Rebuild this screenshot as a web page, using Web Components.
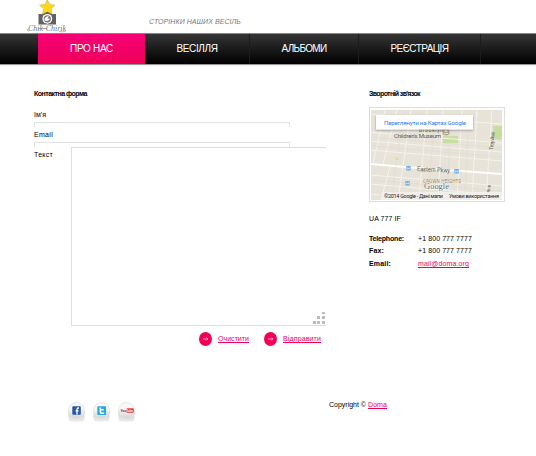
<!DOCTYPE html>
<html lang="uk">
<head>
<meta charset="utf-8">
<title>Chik-Chirik</title>
<style>
body{margin:0;background:#fff;font-family:"Liberation Sans",Arial,sans-serif;font-size:7px;color:#000}
</style>
</head>
<body>
<wed-page></wed-page>
<script>
const define=(name,html,init)=>customElements.define(name,class extends HTMLElement{
  connectedCallback(){
    if(this.shadowRoot)return;
    const t=document.createElement('template');
    t.innerHTML=html;
    this.attachShadow({mode:'open'}).append(t.content.cloneNode(true));
    if(init)init(this,this.shadowRoot);
  }
});

/* A single line of text tracked to a given width. */
define('fit-text','<style>:host{display:block;white-space:nowrap}span{display:inline-block}</style><span></span>',(el,root)=>{
  const s=root.querySelector('span');
  s.textContent=el.textContent;
  const n=s.textContent.length,w=+el.getAttribute('w');
  s.style.letterSpacing=(w-s.getBoundingClientRect().width)/n+'px';
  el.style.width=w+'px';
});

define('site-logo',`<style>:host{display:block;width:42px;height:33px}svg{display:block}</style>
<svg width="42" height="33" viewBox="0 0 42 33">
<path d="M12.500 14h4.500l1.500-2h6l1.500 2h4v10.500h-17.500z" fill="#606165"/>
<circle cx="21.300" cy="18.800" r="4.900" fill="#fff"/><circle cx="21.300" cy="18.800" r="3.600" fill="#77787c"/>
<path d="M18.500 20.500q-.5-4 4.500-4.500l-1.500 2.300 2.500.5q-1 3-5.500 1.700z" fill="#fff"/>
<path d="M21.300-.4l2.300 4.900 5.400.6-4 3.700 1.100 5.400-4.800-2.700-4.800 2.700 1.100-5.400-4-3.700 5.400-.6z" fill="#ffd916" stroke="#c9a22b" stroke-width=".5"/>
<text x="2" y="31" font-family="Liberation Serif,serif" font-style="italic" font-size="8.500" fill="#74757a" textLength="38" lengthAdjust="spacingAndGlyphs">Chik-Chirik</text>
<path d="M3 31.300q-2-.3-1.500-2.500M12 28.500h9M33 31.500q4 1 7-.5" stroke="#8b8c90" stroke-width=".6" fill="none"/>
</svg>`);

define('nav-item',`<style>
:host{display:flex;justify-content:center;align-items:center;box-sizing:border-box;height:30px;border-right:1px solid #1c1c1c;color:#fff;font-size:10px;line-height:12px;padding-bottom:1px}
:host([active]){background:linear-gradient(#f70078,#ee0058);border-right:0}
</style><slot></slot>`,el=>{el.style.width=el.getAttribute('width')+'px'});

define('nav-bar',`<style>
:host{display:flex;box-sizing:border-box;height:31px;padding-left:38px;border-top:1px solid #858585;background:linear-gradient(#353535,#000);box-shadow:0 1px 1px #999}
</style><slot></slot>`);

define('form-field',`<style>
:host{display:block;height:20px}
.l{height:12px;line-height:10px}
.i{box-sizing:border-box;width:256px;height:5px;border:1px solid #e2e2e2;border-bottom:0}
</style><div class="l"><slot></slot></div><div class="i"></div>`);

define('text-area',`<style>
:host{display:flex;box-sizing:border-box;width:255px;height:179px;border:1px solid #ddd;border-right:0;background:#fff;justify-content:flex-end;align-items:flex-end}
svg{display:block}
</style><svg width="14" height="14" fill="#bcbcbc"><path d="M10 1h3v2h-3zM5 5h3v3h-3zM10 5h3v3h-3zM1 10h3v3h-3zM5 10h3v3h-3zM10 10h3v3h-3z"/></svg>`);

define('pink-link',`<style>:host{display:inline-block;height:7px;color:#ee0060;border-bottom:1px solid #ee0060;line-height:8px}</style><slot></slot>`);

define('arrow-button',`<style>:host{display:flex;align-items:center;gap:6px}svg{display:block}</style>
<svg width="13" height="14"><ellipse cx="6.500" cy="7" rx="6.500" ry="7" fill="#f20058"/><path d="M4 7h5M7.600 5.700L9 7 7.600 8.300" stroke="#ffabc9" stroke-width=".9" fill="none"/></svg>
<pink-link><slot></slot></pink-link>`);

define('map-card',`<style>
:host{display:block;box-sizing:border-box;width:136px;height:95px;border:1px solid #ddd;padding:2px 1px}
svg{display:block;font-family:Roboto,sans-serif}
</style>
<svg width="131" height="90" viewBox="0 0 131 90">
<defs><filter id="s" x="-10%" y="-20%" width="120%" height="150%"><feDropShadow dx="0" dy="1" stdDeviation=".8" flood-opacity=".35"/></filter></defs>
<rect width="131" height="90" fill="#e8e3d9"/>
<g fill="#c6dfa0"><path d="M72 26h15v7H72zM122 16h9v14l-9-1z"/></g>
<g stroke="#f6f4ee" stroke-width=".9" fill="none">
<path d="M-2 22L131 33M-2 31L131 42M-2 40L131 51M-2 65L131 76M-2 74L131 85M-2 4L131 14M-2 84L70 90"/>
<path d="M14 0L2 54M26 0L12 54M40 0L27 90M56 0L48 90M72 0L67 90M91 0L86 90M106 0L101 90M121 0L115 90M19 57L10 90"/>
</g>
<path d="M0 54L34 57 131 64" stroke="#fff" stroke-width="2" fill="none"/>
<g stroke="#dcd6ca" stroke-width=".4"><path d="M0 27L131 38M0 70L131 81M0 36L131 47M64 0L57 90M80 0L76 90M98 0L94 90M33 0L20 90"/></g>
<g fill="#555" font-size="6">
<text x="48" y="22" font-size="5" textLength="24">Brooklyn</text>
<text x="23" y="27.500" textLength="47">Children's Museum</text>
<text x="46" y="61" font-size="6.500" textLength="33" lengthAdjust="spacingAndGlyphs" transform="rotate(3 46 61)">Eastern Pkwy</text>
<text transform="translate(122 40) rotate(-84)" font-size="5.500" textLength="18">Troy Ave</text>
<text transform="translate(119 83) rotate(-84)" font-size="5">Ave</text>
<text x="52" y="73" font-size="4.500" fill="#9a8b6d" textLength="38">CROWN HEIGHTS</text></g>
<circle cx="75" cy="22" r="3.500" fill="#b5a58e"/><path d="M73 23.500h4M73.500 21.500h3l-1.500-1.500z" stroke="#fff" stroke-width=".6" fill="none"/>
<circle cx="26" cy="49" r="1.200" fill="#ecd28c"/>
<g fill="#6faee8"><rect x="35" y="56" width="5" height="4.500" rx="1"/><rect x="83" y="59" width="5" height="4.500" rx="1"/><rect x="34" y="71" width="5" height="4.500" rx="1"/></g>
<g fill="none" stroke="#fff" stroke-width=".7"><path d="M36 59.500v-2l1.500 1.500 1.500-1.500v2M84 62.500v-2l1.500 1.500 1.500-1.500v2M35 74.500v-2l1.500 1.500 1.500-1.500v2"/></g>
<text x="53" y="79" font-family="Liberation Serif,serif" font-size="8.500" fill="#666" stroke="#fff" stroke-width=".8" paint-order="stroke" textLength="25" lengthAdjust="spacingAndGlyphs">Google</text>
<rect x="11" y="82" width="120" height="8" fill="#f3f1ec" opacity=".85"/>
<g font-size="5.500" fill="#222"><text x="13" y="88" textLength="59" lengthAdjust="spacing">©2014 Google - Дані мапи</text><text x="78" y="88" textLength="50">Умови використання</text></g>
<rect x="5" y="5" width="97" height="14.500" fill="#fff" filter="url(#s)"/>
<text x="13" y="15" font-size="6.200" fill="#3079ed" textLength="82">Переглянути на Картах Google</text>
</svg>`);

define('social-icon',`<style>:host{display:block;width:17px;height:20px}svg{display:block}</style>
<svg width="17" height="20"><defs><linearGradient id="g" x2="0" y2="1"><stop offset=".4" stop-color="#f8f8f8"/><stop offset="1" stop-color="#d4d4d4"/></linearGradient><linearGradient id="h" x2="0" y2="1"><stop stop-color="#ccc"/><stop offset="1" stop-color="#ececec"/></linearGradient></defs>
<path d="M.5 9h16v6.500q0 4-3 4H3.500q-3 0-3-4z" fill="url(#h)"/><circle cx="8.500" cy="8.500" r="8" fill="url(#g)" stroke="#dcdcdc" stroke-width=".7"/><g class="m"></g></svg>`,(el,root)=>{
 root.querySelector('.m').innerHTML={
 facebook:'<rect x="4.300" y="4.300" width="8.500" height="8.500" rx=".8" fill="#2656a5"/><path d="M11 6h-.7q-1.300 0-1.300 1.200v5.300M7.500 8.800h3.200" stroke="#fff" stroke-width="1.300" fill="none"/>',
 twitter:'<rect x="4.300" y="4.300" width="8.800" height="8.800" rx=".8" fill="#29a8df"/><path d="M7.300 5.500v4q0 1.800 1.800 1.800h2M7.300 7.800h3.500" stroke="#fff" stroke-width="1.500" fill="none"/>',
 youtube:'<rect x="8.300" y="6.300" width="7.500" height="4.500" rx="1.300" fill="#e53b38"/><text x="2.500" y="10" font-family="Liberation Sans,sans-serif" font-weight="bold" font-size="4" fill="#333" textLength="12.500" lengthAdjust="spacingAndGlyphs">You<tspan fill="#fff">Tube</tspan></text>'
 }[el.getAttribute('kind')];
});

define('contact-form',`<style>
:host{display:block;width:292px}
b{display:block;height:20px;line-height:8px}
.row{display:flex;justify-content:space-between;margin-top:-6px}
.row>fit-text{margin-top:7px;line-height:8px}
.act{display:flex;gap:15px;margin:6px 0 0 165px}
text-area{margin-top:3px}
</style>
<b><fit-text w="53">Контактна форма</fit-text></b>
<form-field><fit-text w="12">Ім'я</fit-text></form-field>
<form-field><fit-text w="19">Email</fit-text></form-field>
<div class="row"><fit-text w="19">Текст</fit-text><text-area></text-area></div>
<div class="act"><arrow-button><fit-text w="31">Очистити</fit-text></arrow-button><arrow-button><fit-text w="38">Відправити</fit-text></arrow-button></div>`);

define('contact-info',`<style>
:host{display:block;width:136px}
b{display:block}
.t{height:17px;line-height:8px}
.a{margin-top:13px;line-height:8px}
dl{display:grid;grid-template-columns:49px auto;grid-template-rows:12px 13px 13px;margin:12px 0 0;line-height:8px}
dt{font-weight:bold}dd{margin:0}
</style>
<b class="t"><fit-text w="51">Зворотній зв'язок</fit-text></b>
<map-card></map-card>
<div class="a"><fit-text w="32">UA 777 IF</fit-text></div>
<dl><dt><fit-text w="35">Telephone:</fit-text></dt><dd><fit-text w="54">+1 800 777 7777</fit-text></dd>
<dt><fit-text w="15">Fax:</fit-text></dt><dd><fit-text w="54">+1 800 777 7777</fit-text></dd>
<dt><fit-text w="22">Email:</fit-text></dt><dd><pink-link><fit-text w="51">mail@doma.org</fit-text></pink-link></dd></dl>`);

define('wed-page',`<style>
:host{display:flex;flex-direction:column;height:456px;overflow:hidden}
header{display:flex;height:33px;padding-left:26px}
.tag{margin:17px 0 0 81px;font-style:italic;color:#777;line-height:9px}
main{display:flex;gap:43px;padding:26px 0 0 34px;height:314px;box-sizing:border-box}
contact-info,contact-form{margin-top:0}
footer{display:flex;margin-top:24px;padding-left:68px}
.so{display:flex;gap:8px;width:261px}
.cp{display:flex;gap:2px;line-height:8px;height:9px;margin-top:-1px}
</style>
<header><site-logo></site-logo><fit-text class="tag" w="92">СТОРІНКИ НАШИХ ВЕСІЛЬ</fit-text></header>
<nav-bar><nav-item width="107" active><fit-text w="43">ПРО НАС</fit-text></nav-item><nav-item width="105"><fit-text w="41">ВЕСІЛЛЯ</fit-text></nav-item><nav-item width="109"><fit-text w="45">АЛЬБОМИ</fit-text></nav-item><nav-item width="122"><fit-text w="58">РЕЄСТРАЦІЯ</fit-text></nav-item></nav-bar>
<main><contact-form></contact-form><contact-info></contact-info></main>
<footer><div class="so"><social-icon kind="facebook"></social-icon><social-icon kind="twitter"></social-icon><social-icon kind="youtube"></social-icon></div><div class="cp"><fit-text w="37">Copyright ©</fit-text><pink-link><fit-text w="19">Doma</fit-text></pink-link></div></footer>`);
</script>
</body>
</html>
